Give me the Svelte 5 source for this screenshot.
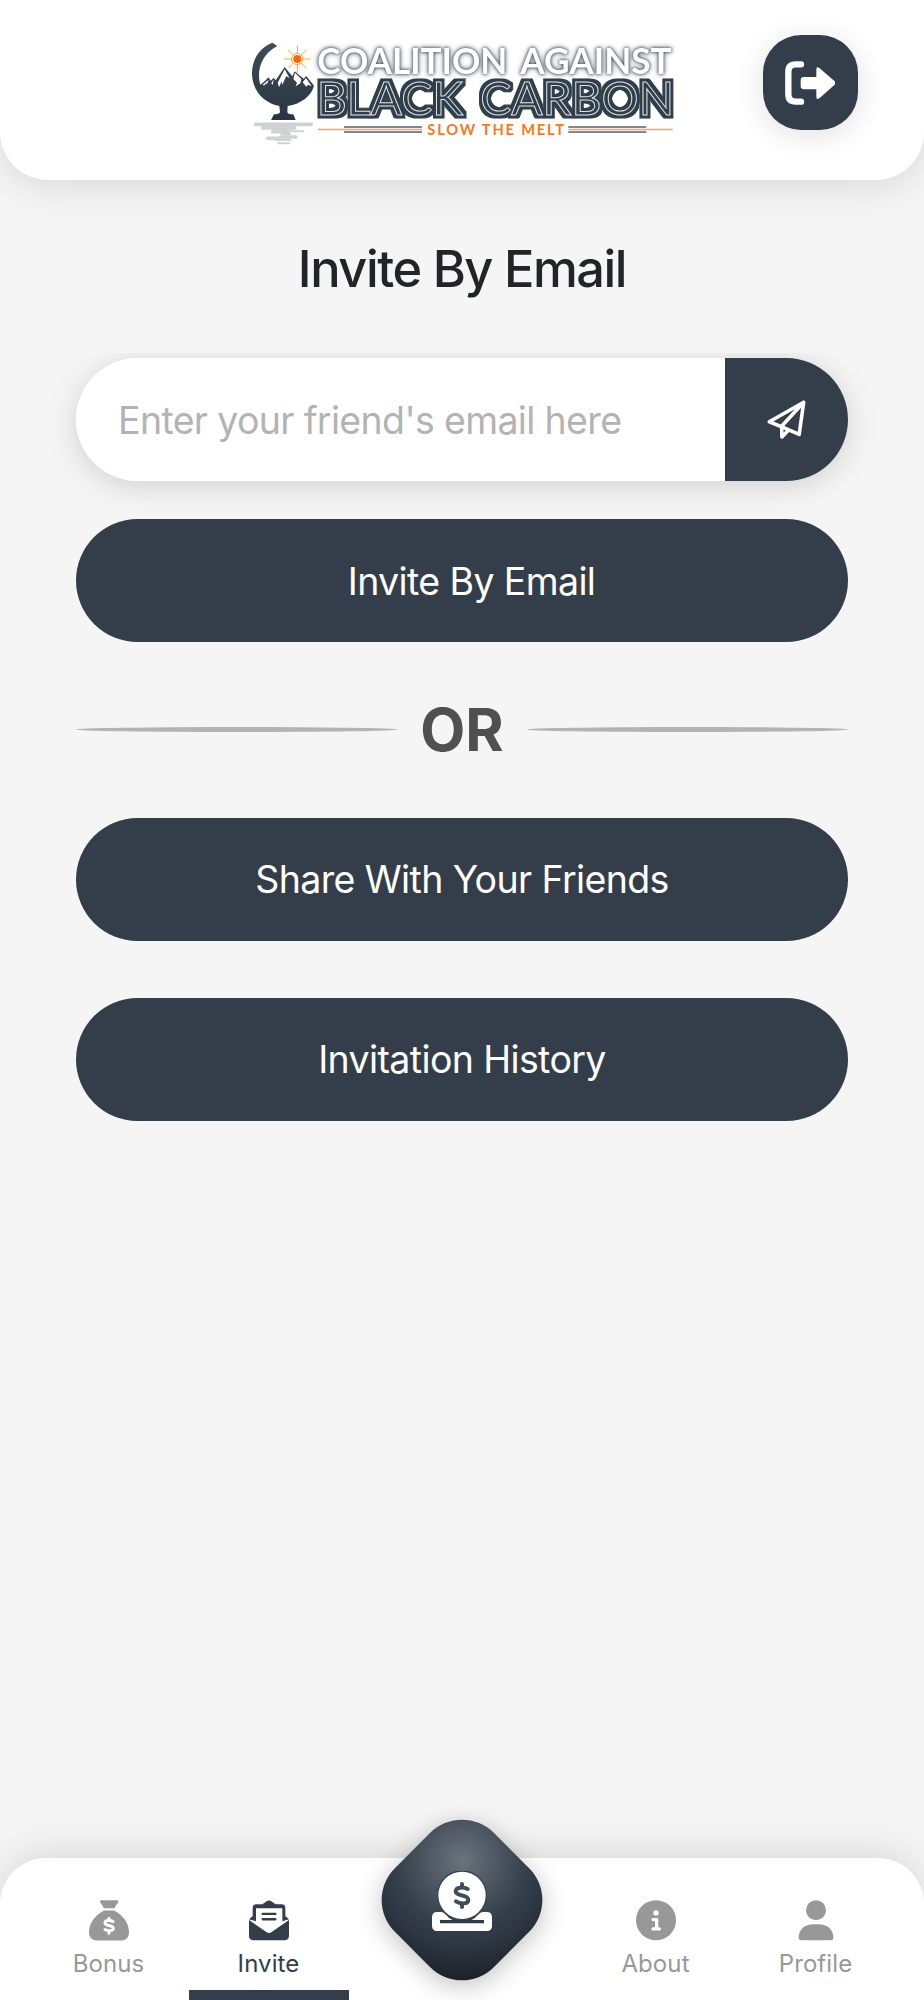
<script>
    let email = "";
    let active = "Invite";

    const leftTabs = ["Bonus", "Invite"];
    const rightTabs = ["About", "Profile"];
</script>

{#snippet tab(name)}
    <button class="tab" class:active={active === name} on:click={() => {active = name}}>
        <svg class="tab-icon" viewBox="0 0 120 120">
            {#if name === "Bonus"}
                <path d="M38 0H83Q90 0 87 7L76 24H45L34 7Q31 0 38 0Z"/>
                <path d="M45 31H76C101 45 120 68 120 96C120 112 110 121 95 121H25C10 121 0 112 0 96C0 68 19 45 45 31Z"/>
                <path class="cut" d="M60 54V60M60 92V99M72 64C66 60 48 58 48 68C48 78 73 74 73 84C73 94 54 92 48 88"/>
            {:else if name === "Invite"}
                <path d="M0 57L11 47V23Q11 12 22 12H40L53 3Q60 -2 67 3L80 12H98Q109 12 109 23V47L120 57L100 63V24H21V63Z"/>
                <path d="M41 41H79M41 57H79" class="rule"/>
                <path d="M0 59L52 95Q60 101 68 95L120 59V106Q120 120 106 120H14Q0 120 0 106Z"/>
            {:else if name === "About"}
                <circle cx="60" cy="60" r="60"/>
                <circle class="hole" cx="60" cy="38" r="8"/>
                <path class="cut info" d="M51 58H62V86M51 86H70"/>
            {:else}
                <circle cx="60" cy="30" r="30"/>
                <path d="M8 112C8 87 27 72 52 72H68C93 72 112 87 112 112Q112 120 104 120H16Q8 120 8 112Z"/>
            {/if}
        </svg>
        <span class="label">{name}</span>
    </button>
{/snippet}

<div class="page">
    <header>
        <svg class="logo" viewBox="0 0 1350 375">
            <defs>
                <linearGradient id="slate" x1="0" y1="0" x2="0" y2="1">
                    <stop offset="0" stop-color="#3f4c59"/>
                    <stop offset="1" stop-color="#293541"/>
                </linearGradient>
                <!-- thick slate body around the light inner line of each letter -->
                <filter id="thick" x="-5%" y="-10%" width="110%" height="120%" color-interpolation-filters="sRGB">
                    <feMorphology in="SourceAlpha" operator="dilate" radius="8" result="body"/>
                    <feFlood flood-color="#303d4a"/>
                    <feComposite in2="body" operator="in"/>
                    <feMerge>
                        <feMergeNode/>
                        <feMergeNode in="SourceGraphic"/>
                    </feMerge>
                </filter>
            </defs>
            <!-- globe and mountains -->
            <path fill="url(#slate)" d="M97 38C58 54 36 88 36 130C36 182 72 220 118 228L120 246Q119 253 102 253L93 270H167L160 253Q142 253 142 246L143 228C184 221 214 198 222 167L199 138L191 146L164 124L157 139L134 111L107 151L101 143L92 152L86 142L72 155L61 164C50 126 60 76 112 48Z"/>
            <path fill="#fff" d="M134 118L113 158L117 172L125 154L127 164L139 138L149 145ZM165 128L160 147L171 158L167 169L181 160L184 147ZM198 144L188 157L199 170L204 164L215 169ZM86 149L68 164L72 167L78 160L81 163ZM101 148L94 160L98 165Z"/>
            <g class="rays">
                <path d="M172 46V72M172 103V129M132 87H156M188 87H213M145 60L160 75M184 99L199 114M199 60L184 75M160 99L145 114"/>
                <circle cx="172" cy="87" r="17"/>
            </g>
            <circle cx="172" cy="87" r="12" fill="#ff6500"/>
            <path class="water" d="M47 283H214M68 294H164M98 305H144M122 321H168M83 325H126"/>
            <path class="water thinner" d="M96 304H190M124 312H150M108 330H150M115 340H147"/>
            <!-- lettering -->
            <g class="coalition">
                <text x="232" y="132" textLength="570" lengthAdjust="spacingAndGlyphs">COALITION</text>
                <text x="841" y="132" textLength="454" lengthAdjust="spacingAndGlyphs">AGAINST</text>
            </g>
            <g class="carbon">
                <text x="230" y="254" textLength="439" lengthAdjust="spacingAndGlyphs">BLACK</text>
                <text x="721" y="254" textLength="581" lengthAdjust="spacingAndGlyphs">CARBON</text>
            </g>
            <path class="bar" d="M312 291H546M312 306H546M985 291H1219M985 306H1219"/>
            <path class="thin" d="M234 298.500H546M985 298.500H1298"/>
            <text class="melt" x="562" y="314" textLength="410">SLOW THE MELT</text>
        </svg>
        <button class="logout" aria-label="Log out">
            <svg viewBox="0 0 150 132">
                <path d="M48 10H32Q10 10 10 32V100Q10 122 32 122H48"/>
                <path class="arrow" d="M57 48H94V26Q94 14 104 22L149 61Q153 66 149 71L104 111Q94 118 94 107V85H57Q47 85 47 75V58Q47 48 57 48Z"/>
            </svg>
        </button>
    </header>

    <main>
        <h1>Invite By Email</h1>
        <div class="field-wrap">
            <div class="field">
                <input type="email" placeholder="Enter your friend's email here" bind:value={email}>
                <button class="send" aria-label="Send">
                    <svg viewBox="0 0 114 114">
                        <path d="M4 64L110 4L96 103L50 83ZM110 4L42 78L43 111L62 91"/>
                    </svg>
                </button>
            </div>
        </div>
        <button class="action invite-email">Invite By Email</button>
        <div class="or">
            <div class="line"></div>
            <span>OR</span>
            <div class="line"></div>
        </div>
        <button class="action share">Share With Your Friends</button>
        <button class="action history">Invitation History</button>
    </main>

    <nav>
        {#each leftTabs as name}
            {@render tab(name)}
        {/each}
        <div class="middle">
            <button class="donate" aria-label="Donate">
                <svg viewBox="0 0 180 180">
                    <path d="M16 123H27Q34 123 40 130Q60 154 90 154Q120 154 140 130Q146 123 153 123H164Q180 123 180 139V164Q180 180 164 180H16Q0 180 0 164V139Q0 123 16 123Z" fill="#fff"/>
                    <path d="M24 147H156V157H24Z" fill="#303a46"/>
                    <circle cx="90" cy="73" r="73" fill="#fff"/>
                    <path class="dollar" d="M90 39V49M90 98V108M107 54C96 48 71 47 71 61C71 77 109 70 109 86C109 102 82 98 72 91"/>
                </svg>
            </button>
        </div>
        {#each rightTabs as name}
            {@render tab(name)}
        {/each}
    </nav>
</div>

<style>
:global(body) {
    background: #f5f5f5;
}
.page {
    display: flex;
    flex-direction: column;
    height: 2000px;
    overflow: hidden;
    background: #f5f5f5;
    font-family: Inter, "Liberation Sans", sans-serif;
}
button {
    border: none;
    padding: 0;
    font-family: inherit;
    cursor: pointer;
}
header {
    box-sizing: border-box;
    flex: none;
    display: flex;
    justify-content: space-between;
    align-items: flex-start;
    height: 180px;
    padding: 30px 66px 0 240px;
    background: #fff;
    border-radius: 0 0 48px 48px;
    box-shadow: 0 5px 40px rgba(0, 0, 0, 0.12);
}
.logo {
    width: 450px;
    height: 125px;
    overflow: visible;
}
.rays {
    fill: none;
    stroke: #f4a64e;
    stroke-width: 3;
}
.water {
    fill: none;
    stroke: #d0d1d2;
    stroke-width: 11;
    stroke-linecap: round;
}
.thinner {
    stroke-width: 6;
}
.coalition {
    font: 700 106px Lato, sans-serif;
    fill: #fff;
    filter: drop-shadow(0 0 5px #404c58) drop-shadow(0 0 8px #77818b);
}
.carbon {
    font: 400 142px Lato, sans-serif;
    fill: #303d4a;
    stroke: #dfe3e6;
    stroke-width: 3;
    filter: url(#thick);
}
.bar {
    stroke: #7f8991;
    stroke-width: 6;
}
.thin {
    stroke: #f5a069;
    stroke-width: 4;
}
.melt {
    font: 700 44px Lato, sans-serif;
    fill: #f9771d;
}
.logout {
    display: grid;
    place-items: center;
    width: 95px;
    height: 95px;
    margin-top: 5px;
    padding: 1px 1px 0 0;
    background: #343e4a;
    border-radius: 38px;
    box-shadow: 0 5px 30px rgba(0, 0, 0, 0.12);
}
.logout svg {
    width: 50px;
    height: 44px;
    fill: none;
    stroke: #fff;
    stroke-width: 19;
    stroke-linecap: round;
}
.logout .arrow {
    fill: #fff;
    stroke: none;
}
main {
    flex: 1;
    display: flex;
    flex-direction: column;
    padding: 58px 76px 0;
}
h1 {
    height: 61px;
    margin: 0;
    line-height: 61px;
    font-size: 50.500px;
    font-weight: 500;
    letter-spacing: -1.450px;
    text-align: center;
    color: #212529;
}
/* clips the field shadow above its top edge */
.field-wrap {
    margin: 54px -60px 0;
    padding: 5px 60px 38px;
    overflow: hidden;
}
.field {
    display: flex;
    height: 123px;
    border-radius: 62px;
    background: #fff;
    box-shadow: 0 5px 30px rgba(0, 0, 0, 0.15);
    overflow: hidden;
}
input {
    flex: 1;
    min-width: 0;
    border: none;
    outline: none;
    padding: 2px 0 0 42px;
    background: #fff;
    font-family: inherit;
    font-size: 37.500px;
    letter-spacing: -0.650px;
}
input::placeholder {
    color: #b3b3b3;
    opacity: 1;
}
.send {
    display: grid;
    place-items: center;
    width: 123px;
    background: #343e4a;
}
.send svg {
    width: 37px;
    height: 37px;
    fill: none;
    stroke: #fff;
    stroke-width: 11;
    stroke-linejoin: round;
    stroke-linecap: round;
    overflow: visible;
}
.action {
    flex: none;
    height: 123px;
    padding-top: 1px;
    border-radius: 62px;
    background: #343e4a;
    color: #fff;
    font-size: 37.500px;
    letter-spacing: -0.620px;
}
.invite-email {
    padding-left: 19px;
}
.or {
    display: flex;
    align-items: center;
    justify-content: space-between;
    height: 175.500px;
    color: #505050;
    font-size: 58.500px;
    font-weight: 700;
}
.line {
    width: 321px;
    height: 5px;
    border-radius: 50%;
    background: #b3b3b3;
}
.history {
    margin-top: 57px;
}
nav {
    flex: none;
    display: flex;
    justify-content: center;
    height: 142px;
    background: #fff;
    border-radius: 46px 46px 0 0;
    box-shadow: 0 -5px 40px rgba(0, 0, 0, 0.12);
}
.tab {
    box-sizing: border-box;
    display: flex;
    flex-direction: column;
    align-items: center;
    width: 160px;
    padding: 41.500px 0 0;
    background: none;
    color: #989898;
    border-bottom: 10px solid transparent;
}
.tab.active {
    color: #343e4a;
    border-color: #343e4a;
}
.tab-icon {
    width: 40px;
    height: 40.500px;
    fill: currentColor;
    overflow: visible;
}
.cut {
    fill: none;
    stroke: #fff;
    stroke-width: 9;
    stroke-linecap: round;
}
.info {
    stroke-width: 10;
    stroke-linejoin: round;
}
.hole {
    fill: #fff;
}
.rule {
    stroke: currentColor;
    stroke-width: 7;
    stroke-linecap: round;
}
.label {
    margin-top: 9px;
    line-height: 30px;
    font-size: 24px;
    letter-spacing: 0.100px;
}
.middle {
    width: 227px;
    display: flex;
    justify-content: center;
}
.donate {
    display: grid;
    place-items: center;
    width: 140px;
    height: 140px;
    margin-top: -28px;
    border-radius: 45px;
    transform: rotate(45deg);
    background: radial-gradient(circle at 30% 30%, #6b737c 0, #343f4b 48%, #2e3844 60%, #1b2026 88%);
    box-shadow: 4px 4px 26px rgba(0, 0, 0, 0.24);
}
.donate svg {
    width: 60px;
    height: 60px;
    transform: rotate(-45deg) translateY(1px);
}
/* gap between the coin and its tray */
.donate circle {
    stroke: #37414d;
    stroke-width: 4;
}
.dollar {
    fill: none;
    stroke: #434d58;
    stroke-width: 12;
    stroke-linecap: round;
}
</style>
